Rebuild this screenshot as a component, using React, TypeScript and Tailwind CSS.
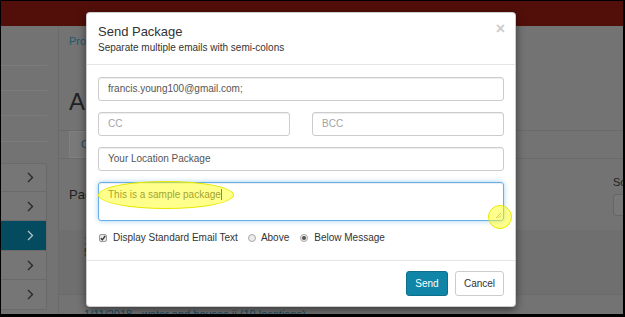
import React from "react";

const font = { fontFamily: '"Liberation Sans", Arial, Helvetica, sans-serif' };

function Chevron({ light }: { light?: boolean }) {
  return (
    <svg width="7" height="11" viewBox="0 0 7 11" fill="none">
      <path d="M1 1l4.5 4.5L1 10" stroke={light ? "#b4c3c8" : "#262626"} strokeWidth="1.3" />
    </svg>
  );
}

function SideItem({ h, active, first }: { h: string; active?: boolean; first?: boolean }) {
  return (
    <div
      className={`${h} flex items-center justify-end pr-[12px] border-b border-r border-[#6a6a6a] ${
        first ? "rounded-tr-[3px] border-t" : ""
      } ${active ? "bg-[#054b5f]" : "bg-[#767676]"}`}
    >
      <Chevron light={active} />
    </div>
  );
}

function Radio({ checked }: { checked?: boolean }) {
  return (
    <span className="w-[8px] h-[8px] rounded-full border border-[#a9a9a9] bg-[#ececec] flex items-center justify-center">
      {checked && <span className="w-[4px] h-[4px] rounded-full bg-[#555]" />}
    </span>
  );
}

const inputCls =
  "w-full h-[24px] border border-[#ccc] rounded-[3px] px-[9px] text-[10px] text-[#555] bg-white outline-none shadow-[inset_0_1px_1px_rgba(0,0,0,0.075)] placeholder:text-[#a3a3a3]";

export default function App() {
  return (
    <div className="w-[625px] h-[317px] bg-black pt-px pl-px pr-[2px] pb-[3px]" style={font}>
      <div className="relative w-full h-full overflow-hidden bg-[#737373]">
        <div className="h-[25px] bg-[#520f0a]" />
        <div className="flex">
          <aside className="w-[46px] shrink-0 flex flex-col">
            <div className="h-[40px] border-b border-[#7c7c7c]" />
            <div className="h-[25px] border-b border-[#7c7c7c]" />
            <div className="h-[25px] border-b border-[#7c7c7c]" />
            <div className="h-[26px] border-b border-[#7c7c7c]" />
            <div className="h-[21px]" />
            <SideItem h="h-[29px]" first />
            <SideItem h="h-[29px]" />
            <SideItem h="h-[30px]" active />
            <SideItem h="h-[29px]" />
            <SideItem h="h-[30px]" />
          </aside>
          <main className="flex-1 ml-[11px] border-l border-[#6b6b6b] pl-[10px] min-w-0">
            <div className="pt-[9px] text-[11px] leading-[12px] text-[#1d5a70]">Projects</div>
            <h1 className="mt-[41px] text-[24px] leading-[28px] text-[#222] whitespace-nowrap">All Packages</h1>
            <div className="mt-[14px] -ml-[10px] pl-[10px] h-[29px] border-y border-[#6a6a6a] flex">
              <div className="h-full border border-[#808080] bg-[#797979] px-[11px] flex items-center text-[11px] text-[#1d4e60] whitespace-nowrap">
                Create Package
              </div>
            </div>
            <div className="mt-[17px] flex items-start">
              <div className="flex-1 mt-[11px] text-[13px] leading-[16px] text-[#202020]">Packages</div>
              <div className="w-[150px] shrink-0 mr-[-140px]">
                <div className="text-[11px] leading-[12px] text-[#202020] whitespace-nowrap">Sort by:</div>
                <div className="mt-[6px] h-[22px] border border-[#666] rounded-[3px] bg-[#777]" />
              </div>
            </div>
            <div className="mt-[14px] -ml-[10px] pl-[25px] pt-[6px] h-[65px] bg-[#6f6f6f] border-b border-[#6a6a6a] text-[11px] leading-[11px]">
              <div className="text-[#1d5a70] whitespace-nowrap">2/14/2018 - packages</div>
              <div className="text-[#3b2a20] whitespace-nowrap">5 locations</div>
            </div>
            <div className="mt-[13px] ml-[15px] text-[11px] leading-[12px] text-[#174e66] underline whitespace-nowrap">
              1/11/2018 - water and houses ii (10 locations)
            </div>
          </main>
        </div>

        <div className="absolute left-[85px] top-[11px] w-[430px] bg-white rounded-[4px] border border-black/20 shadow-[0_3px_9px_rgba(0,0,0,0.5)]">
          <div className="relative px-[11px] pt-[11px] pb-[10px] border-b border-[#e5e5e5]">
            <div className="text-[13px] leading-[15px] text-[#333]">Send Package</div>
            <div className="mt-[2px] text-[10px] leading-[13px] text-[#333]">Separate multiple emails with semi-colons</div>
            <span className="absolute right-[10px] top-[8px] text-[16px] leading-[16px] font-bold text-black opacity-20">×</span>
          </div>
          <div className="px-[11px] pt-[10px] pb-[15px]">
            <input readOnly className={inputCls} value="francis.young100@gmail.com;" />
            <div className="grid grid-cols-2 gap-[22px] mt-[11px]">
              <input readOnly className={inputCls} placeholder="CC" />
              <input readOnly className={inputCls} placeholder="BCC" />
            </div>
            <input readOnly className={`${inputCls} mt-[11px]`} value="Your Location Package" />
            <div className="relative mt-[11px] h-[39px] border border-[#66afe9] rounded-[3px] px-[9px] pt-[6px] text-[10px] leading-[12px] text-[#555] shadow-[inset_0_1px_1px_rgba(0,0,0,0.075),0_0_5px_rgba(102,175,233,0.6)]">
              This is a sample package
              <span className="inline-block w-px h-[11px] bg-[#333] align-[-2px]" />
              <svg className="absolute right-[1px] bottom-[1px]" width="7" height="7" viewBox="0 0 7 7">
                <path d="M6 1L1 6M6 3.5L3.5 6" stroke="#9a9a9a" strokeWidth="0.9" />
              </svg>
              <span className="absolute left-[-1px] top-[-2px] w-[136px] h-[28px] rounded-[50%] bg-[#ffff00]/45 border border-[#e8e800]" />
              <span className="absolute left-[389px] top-[22px] w-[24px] h-[24px] rounded-full bg-[#ffff00]/45 border border-[#e8e800]" />
            </div>
            <div className="mt-[10px] h-[14px] flex items-center text-[10px] text-[#333] whitespace-nowrap">
              <span className="ml-[1px] w-[8px] h-[8px] rounded-[2px] border border-[#9a9a9a] bg-[#e6e6e6] flex items-center justify-center">
                <svg width="6" height="6" viewBox="0 0 6 6">
                  <path d="M0.8 3.2L2.4 4.8L5.2 1" stroke="#333" strokeWidth="1.3" fill="none" />
                </svg>
              </span>
              <span className="ml-[6px]">Display Standard Email Text</span>
              <span className="ml-[10px]">
                <Radio />
              </span>
              <span className="ml-[5px]">Above</span>
              <span className="ml-[11px]">
                <Radio checked />
              </span>
              <span className="ml-[6px]">Below Message</span>
            </div>
          </div>
          <div className="border-t border-[#e5e5e5] px-[11px] pt-[10px] pb-[10px] flex justify-end gap-[7px]">
            <button className="w-[42px] h-[25px] rounded-[3px] bg-[#1085a8] border border-[#0d6f8c] text-white text-[10px]">
              Send
            </button>
            <button className="w-[49px] h-[25px] rounded-[3px] bg-white border border-[#ccc] text-[#333] text-[10px]">
              Cancel
            </button>
          </div>
        </div>
      </div>
    </div>
  );
}
